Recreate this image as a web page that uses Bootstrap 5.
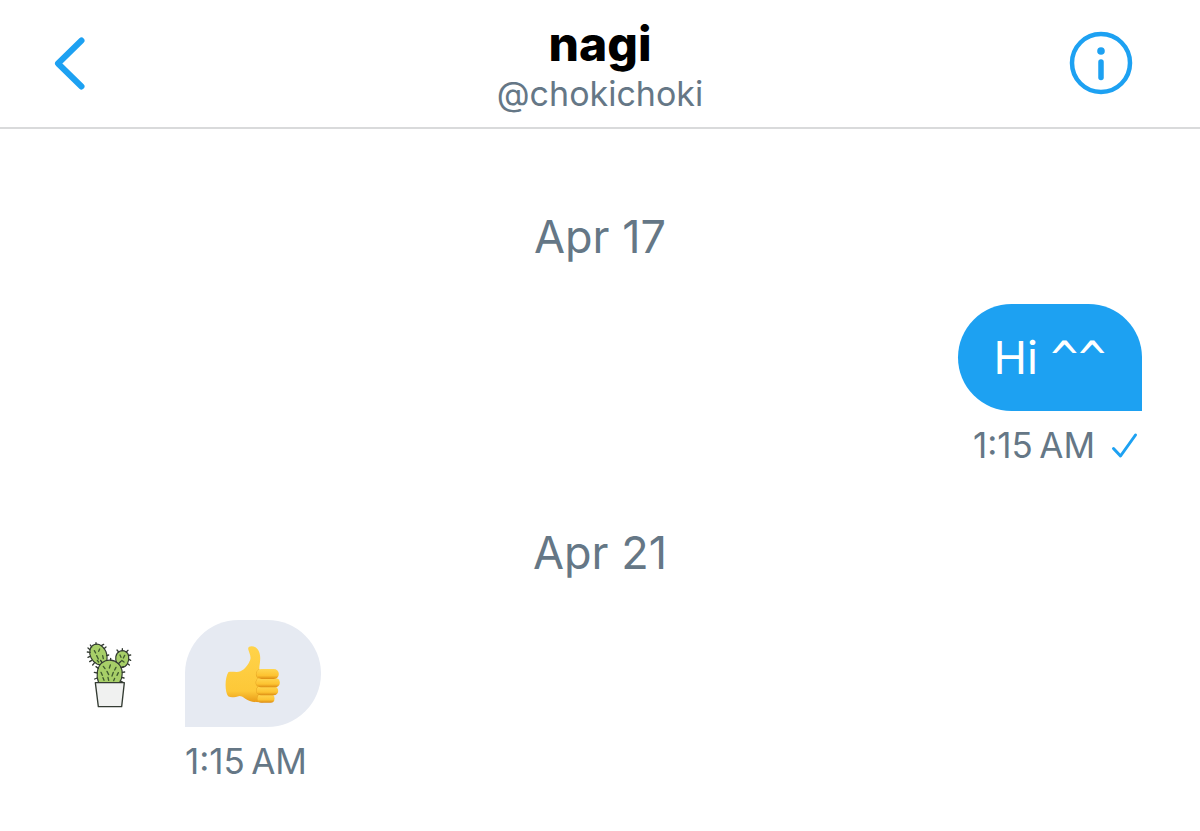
<!DOCTYPE html>
<html lang="en">
<head>
<meta charset="utf-8">
<meta name="viewport" content="width=device-width, initial-scale=1">
<title>nagi – Messages</title>
<link href="https://cdn.jsdelivr.net/npm/bootstrap@5.3.0/dist/css/bootstrap.min.css" rel="stylesheet">
<style>
  body { font-family: Inter, "Liberation Sans", sans-serif; color: #657786; background: #fff; }
  .topbar { border-bottom: 2px solid #d9dadb; padding: 16px 53px 12px; }
  .topbar .side { flex: 1 1 0; }
  .icon-btn { color: #1da1f2; line-height: 0; margin-bottom: 5px; }
  .info-btn { margin-right: 14px; }
  .title { font-size: 48px; line-height: 56px; font-weight: 800; color: #000; }
  .handle { font-size: 34px; line-height: 43px; color: #657786; }
  .thread { padding: 80px 58px 40px; }
  .day { font-size: 45px; line-height: 56px; margin-bottom: 39px; font-weight: 400; }
  .bubble { min-height: 107px; border-radius: 54px; padding: 0 36px; font-size: 45px; line-height: 56px; }
  .bubble.sent { background: #1da1f2; color: #fff; border-bottom-right-radius: 0; }
  .bubble.got { background: #e6eaf2; border-bottom-left-radius: 0; padding: 0 40px 0 39px; }
  .carets { font-family: "DejaVu Sans Mono", monospace; font-size: 46px; line-height: 1; }
  .stamp { font-size: 35px; line-height: 44px; margin-top: 12px; }
  .message { margin-bottom: 58px; }
  .avatar { width: 127px; padding-left: 28px; padding-top: 22px; }
</style>
</head>
<body>
<header class="topbar d-flex align-items-center">
  <div class="side">
    <button type="button" class="icon-btn btn p-0 border-0" aria-label="Back">
      <svg width="34" height="56" viewBox="0 0 34 56" fill="none" stroke="#1da1f2" stroke-width="6" stroke-linecap="round" stroke-linejoin="round"><path d="M28.500 5.500 5 28.500 28.500 51.500"/></svg>
    </button>
  </div>
  <div class="text-center">
    <h1 class="title m-0">nagi</h1>
    <a href="#" class="handle d-block text-decoration-none">@chokichoki</a>
  </div>
  <div class="side text-end">
    <button type="button" class="icon-btn info-btn btn p-0 border-0" aria-label="Conversation info">
      <svg width="64" height="64" viewBox="0 0 64 64" fill="none" stroke="#1da1f2"><circle cx="32" cy="32" r="29" stroke-width="4.500"/><circle cx="32" cy="20" r="3.800" fill="#1da1f2" stroke="none"/><path d="M32 31V46.500" stroke-width="5.500" stroke-linecap="round"/></svg>
    </button>
  </div>
</header>

<main class="thread">
  <h2 class="day text-center">Apr 17</h2>
  <div class="message d-flex flex-column align-items-end">
    <div class="bubble sent d-flex align-items-center"><span>Hi <span class="carets">^^</span></span></div>
    <div class="stamp d-flex align-items-center gap-3 pe-1">
      <time>1:15&#8239;AM</time>
      <svg width="27" height="28" viewBox="0 0 27 28" fill="none" stroke="#1da1f2" stroke-width="3" stroke-linecap="round" stroke-linejoin="round" role="img" aria-label="Delivered"><path d="M2.500 17.500 9.500 25 24.500 4"/></svg>
    </div>
  </div>

  <h2 class="day text-center">Apr 21</h2>
  <div class="d-flex align-items-start">
    <div class="avatar flex-shrink-0">
      <svg width="46" height="67" viewBox="50 36 138 201" role="img" aria-label="nagi" stroke="#333b32" stroke-width="3.500" stroke-linecap="round" stroke-linejoin="round">
        <g fill="#a7cf68">
          <path d="M83 102C68 95 58 76 62 59C66 43 83 38 96 47C107 55 116 72 113 89C111 103 97 108 83 102Z"/>
          <path d="M143 101C136 88 138 70 151 64C163 58 177 66 178 79C180 95 173 111 157 113Z"/>
          <path d="M88 158C79 138 83 111 98 98C112 87 134 88 147 101C162 116 162 139 151 158Z"/>
        </g>
        <path fill="none" stroke-width="4" d="M62 59 56 54M62 67 54 66M67 51 63 45M80 43V38M96 47 103 43M104 56 110 51M62 79 56 82M67 91 61 95M76 98 70 105M112 77 118 75M148 66 143 60M159 62V56M171 66 176 61M178 76 184 75M179 88 184 91M175 101 180 105M87 115 80 110M84 129 75 127M84 144 76 147M98 98 94 91M124 91V85M147 101 155 94M155 113 163 110M159 127 166 126M157 142 164 144M153 153 160 156"/>
        <path fill="none" stroke="#405c2f" stroke-width="4" d="M75 62 79 69M91 57 88 64M82 77 87 87M100 77 102 86M84 91 88 96M152 75 155 82M166 76 162 84M157 91 164 96M102 109 107 116M123 105 120 114M140 112 136 120M95 127 99 136M113 124 118 134M132 127 128 138M147 128 143 136M101 143 104 151M116 142 118 151M136 145 133 152"/>
        <path fill="#f0f1f0" stroke-width="4" d="M78 158H165L157 230H87Z"/>
      </svg>
    </div>
    <div>
      <div class="bubble got d-inline-flex align-items-center">
        <svg width="57" height="58" viewBox="27 31 168 174" role="img" aria-label="Thumbs up">
          <defs>
            <linearGradient id="skin" x1="0" y1="0" x2="0" y2="1"><stop offset="0" stop-color="#ffd34a"/><stop offset=".8" stop-color="#fdc838"/><stop offset="1" stop-color="#e99a17"/></linearGradient>
            <linearGradient id="finger" x1="0" y1="0" x2="0" y2="1"><stop offset="0" stop-color="#ffd650"/><stop offset=".65" stop-color="#fdc331"/><stop offset="1" stop-color="#dc8b12"/></linearGradient>
          </defs>
          <path fill="url(#skin)" d="M39 112C50 109 63 114 75 110C90 103 99 88 104 76C108 65 100 52 98 43C97 34 111 33 120 38C131 45 135 60 134 74C134 87 130 96 132 107L144 104 166 122 166 193C150 207 118 204 101 198C87 194 83 184 72 184C60 187 48 191 38 185C27 169 28 129 39 112Z"/>
          <path fill="none" stroke="#e3a021" stroke-width="2.500" d="M132 105C121 108 120 124 128 131C119 139 120 151 128 156C120 164 122 175 129 180C124 187 126 196 137 201"/>
          <g fill="url(#finger)">
            <rect x="126" y="179" width="51" height="25" rx="12"/>
            <rect x="123" y="155" width="65" height="27" rx="13"/>
            <rect x="122" y="130" width="71" height="28" rx="14"/>
            <rect x="123" y="103" width="67" height="30" rx="15"/>
          </g>
        </svg>
      </div>
      <div class="stamp"><time>1:15&#8239;AM</time></div>
    </div>
  </div>
</main>
<script src="https://cdn.jsdelivr.net/npm/bootstrap@5.3.0/dist/js/bootstrap.bundle.min.js"></script>
</body>
</html>
